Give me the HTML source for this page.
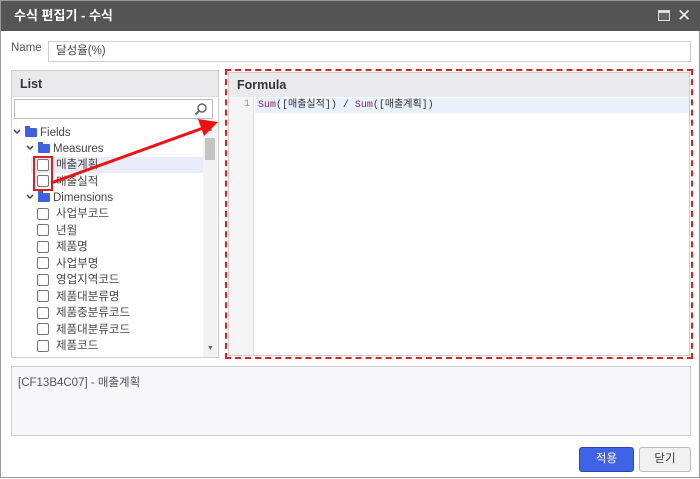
<!DOCTYPE html>
<html><head><meta charset="utf-8"><style>
*{box-sizing:border-box;margin:0;padding:0}
body{width:700px;height:478px;background:#fff;font-family:"Liberation Sans","Noto Sans CJK KR",sans-serif;font-size:11.5px;color:#444;position:relative;overflow:hidden;border:1px solid #999}
.a{position:absolute}
.title{left:0;top:0;width:700px;height:30px;background:#555;color:#fff;font-weight:bold;font-size:13px;line-height:30px;padding-left:13px}
.row{position:absolute;left:36px;height:16px;line-height:16px;white-space:nowrap}
.cb{position:absolute;width:12px;height:12px;border:1px solid #777;border-radius:2px;background:#fff}
.fold{display:inline-block;width:12px;height:9px;background:#4060e0;border-radius:1px;vertical-align:-1px;margin-right:3px;position:relative}
.fold:before{content:"";position:absolute;left:0;top:-2px;width:5px;height:3px;background:#4060e0}
.chev{position:absolute}
</style></head><body>
<div class="a title">수식 편집기 - 수식</div>
<div class="a" style="left:657px;top:9px;width:12px;height:11px;border:1px solid #ddd;border-top-width:3px;background:#666"></div>
<div class="a" style="left:676px;top:5px;color:#eee;font-size:17px">✕</div>

<div class="a" style="left:10px;top:41px;color:#555">Name</div>
<div class="a" style="left:47px;top:40px;width:643px;height:21px;border:1px solid #ccc;padding-left:7px;line-height:18px;color:#444">달성율(%)</div>

<div class="a" style="left:10px;top:69px;width:208px;height:288px;border:1px solid #ccc;background:#fff"></div>
<div class="a" style="left:11px;top:70px;width:206px;height:26px;background:#eaeaec;border-bottom:1px solid #ddd;font-weight:bold;font-size:12.5px;line-height:26px;padding-left:8px;color:#333">List</div>
<div class="a" style="left:13px;top:98px;width:199px;height:20px;border:1px solid #bbb"></div>
<svg class="a" style="left:193px;top:101px" width="14" height="14"><circle cx="8" cy="6" r="4" fill="none" stroke="#666" stroke-width="1.5"/><path d="M5 9 L1.5 12.5" stroke="#666" stroke-width="2"/></svg>
<div class="a" style="left:202px;top:122px;width:14px;height:234px;background:#f2f2f2"></div>
<div class="a" style="left:204px;top:137px;width:10px;height:22px;background:#c4c4c4"></div>
<div class="a" style="left:206px;top:125px;font-size:7px;color:#888">▲</div>
<div class="a" style="left:206px;top:344px;font-size:7px;color:#666">▼</div>
<div class="a" style="left:30px;top:156px;width:172px;height:16px;background:#e8ecf8"></div>

<svg class="chev" style="left:12px;top:128px" width="8" height="6"><path d="M1 1 L4 4 L7 1" fill="none" stroke="#444" stroke-width="1.5"/></svg><div class="row" style="left:24px;top:124px"><span class="fold"></span>Fields</div>
<svg class="chev" style="left:25px;top:144px" width="8" height="6"><path d="M1 1 L4 4 L7 1" fill="none" stroke="#444" stroke-width="1.5"/></svg><div class="row" style="left:37px;top:140px"><span class="fold"></span>Measures</div>
<div class="cb" style="left:36px;top:158px"></div><div class="row" style="left:55px;top:156px">매출계획</div>
<div class="cb" style="left:36px;top:174px"></div><div class="row" style="left:55px;top:173px">매출실적</div>
<svg class="chev" style="left:25px;top:193px" width="8" height="6"><path d="M1 1 L4 4 L7 1" fill="none" stroke="#444" stroke-width="1.5"/></svg><div class="row" style="left:37px;top:189px"><span class="fold"></span>Dimensions</div>
<div class="cb" style="left:36px;top:207px"></div><div class="row" style="left:55px;top:205px">사업부코드</div>
<div class="cb" style="left:36px;top:223px"></div><div class="row" style="left:55px;top:222px">년월</div>
<div class="cb" style="left:36px;top:240px"></div><div class="row" style="left:55px;top:238px">제품명</div>
<div class="cb" style="left:36px;top:256px"></div><div class="row" style="left:55px;top:255px">사업부명</div>
<div class="cb" style="left:36px;top:273px"></div><div class="row" style="left:55px;top:271px">영업지역코드</div>
<div class="cb" style="left:36px;top:289px"></div><div class="row" style="left:55px;top:288px">제품대분류명</div>
<div class="cb" style="left:36px;top:306px"></div><div class="row" style="left:55px;top:304px">제품중분류코드</div>
<div class="cb" style="left:36px;top:322px"></div><div class="row" style="left:55px;top:321px">제품대분류코드</div>
<div class="cb" style="left:36px;top:339px"></div><div class="row" style="left:55px;top:337px">제품코드</div>
<div class="a" style="left:32px;top:155px;width:20px;height:35px;border:2px solid #e02020"></div>

<div class="a" style="left:227px;top:71px;width:462px;height:284px;border:1px solid #ccc;background:#fff"></div>
<div class="a" style="left:228px;top:72px;width:460px;height:24px;background:#eaeaec;font-weight:bold;font-size:12.5px;line-height:24px;padding-left:8px;color:#333">Formula</div>
<div class="a" style="left:228px;top:96px;width:25px;height:258px;background:#f5f5f5;border-right:1px solid #ddd"></div>
<div class="a" style="left:254px;top:97px;width:434px;height:15px;background:#e8f0fc"></div>
<div class="a" style="left:243px;top:98px;font-family:'Liberation Mono',monospace;font-size:10px;color:#999">1</div>
<div class="a" style="left:257px;top:97px;font-family:'Liberation Mono','Noto Sans CJK KR',monospace;font-size:10px;line-height:15px;color:#333;white-space:nowrap"><span style="color:#8a1a6a">Sum</span>([매출실적]) / <span style="color:#8a1a6a">Sum</span>([매출계획])</div>
<div class="a" style="left:224px;top:68px;width:468px;height:290px;border:2px dashed #e02020"></div>

<svg class="a" style="left:0;top:0" width="700" height="478"><path d="M50 182 L205 126" stroke="#ee1111" stroke-width="3"/><path d="M217 121 L197 118 L203 135 Z" fill="#ee1111"/></svg>

<div class="a" style="left:10px;top:365px;width:680px;height:70px;border:1px solid #ccc;background:#f7f7f9;padding:7px 6px;color:#555">[CF13B4C07] - 매출계획</div>

<div class="a" style="left:578px;top:446px;width:55px;height:25px;background:#3f63e6;border:1px solid #2a45b0;border-radius:3px;color:#fff;text-align:center;line-height:23px">적용</div>
<div class="a" style="left:638px;top:446px;width:52px;height:25px;background:#f0f0f0;border:1px solid #bbb;border-radius:3px;color:#333;text-align:center;line-height:23px">닫기</div>
</body></html>
